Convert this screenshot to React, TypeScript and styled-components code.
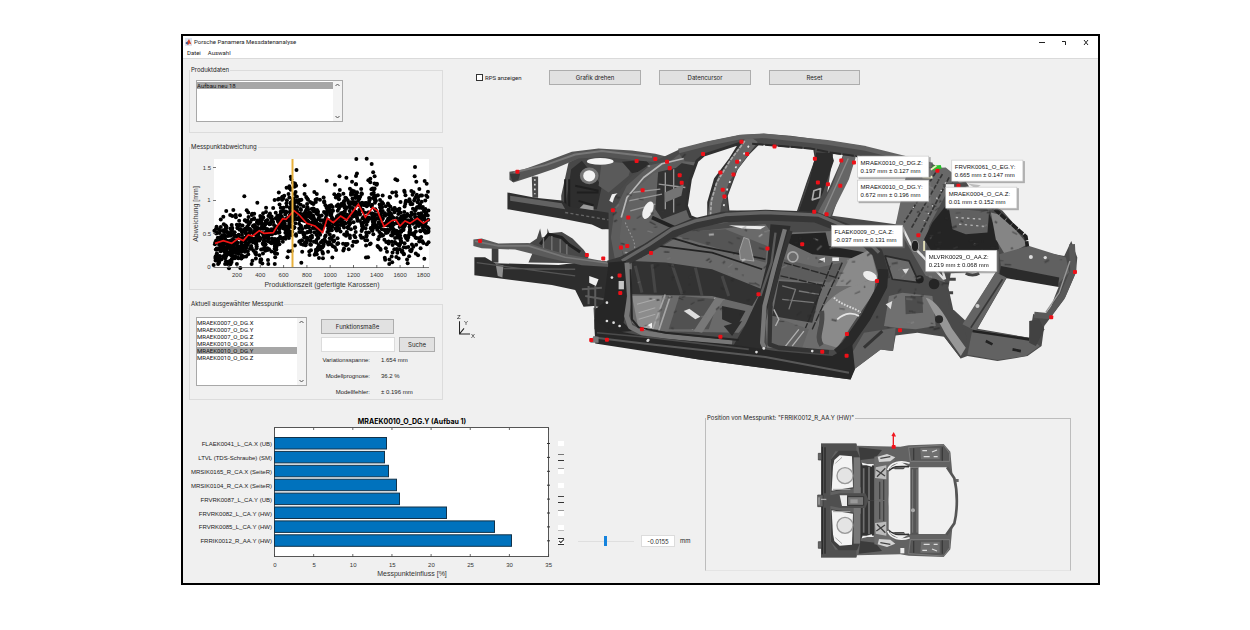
import React from "react";
import styled, { createGlobalStyle } from "styled-components";

const Global = createGlobalStyle`
  *, *::before, *::after { box-sizing: border-box; }
  body { margin: 0; background: #fff; }
  body, button, input, select { font-family: Inter, "Liberation Sans", sans-serif; font-size: 6px; line-height: 8px; color: #1c1c1c; }
`;

/* ---------- window frame ---------- */
const Window = styled.main`
  margin: 34px 150px 0 181px;
  border: 2px solid #000;
  background: #f0f0f0;
`;
const Header = styled.header`
  background: #fff;
  border-bottom: 1px solid #dadada;
`;
const TitleBar = styled.div`
  display: flex;
  align-items: center;
  height: 12px;
  padding: 0 7px 0 2px;
  gap: 2px;
`;
const Title = styled.h1`
  flex: 1;
  margin: 0;
  font: 400 6px/8px Roboto, sans-serif;
`;
const WindowButton = styled.button`
  width: 9px;
  height: 9px;
  margin-left: 11px;
  padding: 0;
  border: 0;
  background: none;
  svg { display: block; }
`;
const MenuBar = styled.nav`
  display: flex;
  gap: 7px;
  height: 10px;
  padding-left: 4px;
`;
const MenuItem = styled.button`
  padding: 0;
  border: 0;
  background: none;
  font-family: Roboto, sans-serif;
`;

/* ---------- layout ---------- */
const Top = styled.div`
  display: grid;
  grid-template-columns: 260px minmax(0, 1fr);
  column-gap: 6px;
`;
const Side = styled.div`
  display: flex;
  flex-direction: column;
  gap: 10px;
  padding: 7px 0 0 6px;
`;
const Bottom = styled.div`
  display: grid;
  grid-template-columns: 372px minmax(0, 1fr) 366px;
  align-items: start;
  margin-top: 9px;
  padding-right: 27px;
`;
const Panel = styled.fieldset<{ $strong?: boolean }>`
  min-width: 0;
  margin: ${p => (p.$strong ? "2px 0 12px" : "0")};
  padding: 0;
  border: 1px solid ${p => (p.$strong ? "#bdbdbd" : "#dcdcdc")};
  border-bottom-color: ${p => (p.$strong ? "#e4e4e4" : "#dcdcdc")};
`;
const Legend = styled.legend`
  padding: 0 1px;
  line-height: 8px;
`;
const Drawing = styled.svg`
  display: block;
  width: 100%;
  height: auto;
`;

/* ---------- controls ---------- */
const ListFrame = styled.div<{ $w: number; $h: number; $mt: number; $mb: number }>`
  display: flex;
  width: ${p => p.$w}px;
  height: ${p => p.$h}px;
  margin: ${p => p.$mt}px 0 ${p => p.$mb}px 6px;
  border: 1px solid #a8a8a8;
  background: #fff;
`;
const List = styled.select`
  flex: 1;
  min-width: 0;
  height: 100%;
  padding: 1px 0 0;
  border: 0;
  outline: 0;
  background: #fff;
  overflow: hidden;
  scrollbar-width: none;
  font: 6px/7px Roboto, sans-serif;
  option { height: 7px; min-height: 7px; padding: 0; font-size: 6px; line-height: 7px; color: #111; }
  option:checked { background: #a6a6a6 linear-gradient(#a6a6a6, #a6a6a6); color: #111; }
`;
const ScrollRail = styled.div`
  display: flex;
  flex-direction: column;
  justify-content: space-between;
  width: 9px;
  padding: 2px;
  background: #f3f3f3;
`;
const Button = styled.button<{ $w: number }>`
  width: ${p => p.$w}px;
  height: 15px;
  padding: 0;
  border: 1px solid #adadad;
  background: #e1e1e1;
`;
const PointBody = styled.div`
  display: flex;
  gap: 14px;
`;
const PointForm = styled.div`
  padding-top: 11px;
`;
const SearchRow = styled.div`
  display: flex;
  gap: 4px;
  margin: 3px 0 4px;
`;
const TextBox = styled.input<{ $w: number; $h: number }>`
  width: ${p => p.$w}px;
  height: ${p => p.$h}px;
  padding: 0;
  border: 1px solid #dcdcdc;
  background: #fff;
  text-align: center;
`;
const Facts = styled.dl`
  display: grid;
  grid-template-columns: 49px auto;
  column-gap: 11px;
  row-gap: 8px;
  margin: 0;
  font-family: "Liberation Sans", sans-serif;
  white-space: nowrap;
`;
const FactName = styled.dt`
  justify-self: end;
`;
const FactValue = styled.dd`
  margin: 0;
`;
const Toolbar = styled.div`
  display: flex;
  align-items: center;
  gap: 18px;
  padding: 11px 0 0 27px;
`;
const CheckLabel = styled.label`
  display: flex;
  align-items: center;
  gap: 2px;
  width: 55px;
  font-family: Roboto, sans-serif;
  white-space: nowrap;
`;
const Check = styled.input`
  appearance: none;
  width: 7px;
  height: 7px;
  margin: 0;
  border: 1px solid #333;
  background: #fff;
`;
const Rows = styled.div`
  padding: 24px 0 0 3px;
`;
const Row = styled.div`
  display: flex;
  align-items: center;
  height: 14px;
`;
const RowCheck = styled.input<{ $top?: string; $bottom?: string; $fill?: string }>`
  appearance: none;
  width: 6px;
  height: 7px;
  margin: 0 14px 0 0;
  border: 0 solid transparent;
  border-top: 1px solid ${p => p.$top ?? "#f0f0f0"};
  border-bottom: 1px solid ${p => p.$bottom ?? "#f0f0f0"};
  background: ${p => p.$fill ?? "#fff"};
  &:checked::before {
    content: "";
    display: block;
    width: 5px;
    height: 3px;
    margin: 0 0 0 1px;
    border: 1px solid #333;
    border-width: 0 0 1px 1px;
    transform: rotate(-45deg);
  }
`;
const Slider = styled.input`
  appearance: none;
  width: 56px;
  height: 11px;
  margin: 0 7px 0 0;
  background: linear-gradient(#dfdfdf, #dfdfdf) center / 100% 1px no-repeat;
  &::-webkit-slider-thumb { appearance: none; width: 3px; height: 10px; background: #1583dd; }
`;
const Unit = styled.span`
  margin-left: 5px;
`;

/* ---------- data ---------- */
const rng = (seed: number) => () => {
  seed = (seed * 1664525 + 1013904223) % 4294967296;
  return seed / 4294967296;
};

// mean deviation over production time, in plot pixels times three
const trend: [number, number][] = [
  [105, 310], [130, 302], [155, 310], [175, 295], [190, 302], [205, 285], [218, 288], [238, 272],
  [252, 280], [280, 278], [292, 258], [308, 236], [318, 238], [342, 212], [358, 225], [380, 250],
  [405, 258], [428, 278], [442, 235], [460, 248], [482, 228], [500, 240], [535, 193], [556, 232],
  [578, 203], [592, 212], [612, 260], [635, 242], [648, 240], [660, 258], [675, 243], [690, 250],
  [712, 235], [730, 250], [748, 238],
];
const trendAt = (x: number) => {
  const i = Math.max(1, trend.findIndex(p => p[0] >= x));
  const [a, b] = [trend[i - 1], trend[i]];
  return a[1] + ((b[1] - a[1]) * (x - a[0])) / (b[0] - a[0]);
};
const samples: [number, number][] = (() => {
  const r = rng(7);
  const out: [number, number][] = [
    [529, 57], [560, 56], [575, 72], [528, 108], [705, 81], [704, 109], [193, 169], [160, 210],
    [147, 385], [181, 384], [241, 366], [364, 368], [683, 370], [101, 375], [232, 188], [374, 136],
    [403, 156], [329, 145], [565, 121], [571, 127], [709, 125], [740, 131], [718, 147], [649, 351],
  ];
  for (let i = 0; i < 1600; i++) {
    const x = 103 + r() * 643;
    const g = (r() + r() + r() + r() - 2) * (x < 280 ? 62 : 78);
    const y = trendAt(x) + g + 3;
    out.push([x, Math.min(372, Math.max(90, y))]);
  }
  return out;
})();

const bars: [string, number][] = [
  ["FLAEK0041_L_CA.X (UB)", 112], ["LTVL (TDS-Schraube) (SM)", 110],
  ["MRSIK0165_R_CA.X (SeiteR)", 114], ["MRSIK0104_R_CA.X (SeiteR)", 122],
  ["FRVRK0087_L_CA.Y (UB)", 125], ["FRVRK0082_L_CA.Y (HW)", 172],
  ["FRVRK0085_L_CA.Y (HW)", 220], ["FRRIK0012_R_AA.Y (HW)", 237],
];
const rowChecks = [
  {}, { $top: "#777", $bottom: "#333", $fill: "transparent" }, { $top: "#999" }, {},
  { $top: "#444", $bottom: "#333", $fill: "transparent" }, { $top: "#999" }, { $bottom: "#bbb" },
  { $top: "#333", $bottom: "#333" },
];
const tips: [number, number, string, string][] = [
  [857, 157, "MRAEK0010_O_DG.Z:", "0.197 mm ± 0.127 mm"],
  [857, 181, "MRAEK0010_O_DG.Y:", "0.672 mm ± 0.196 mm"],
  [951, 161, "FRVRK0061_O_EG.Y:", "0.665 mm ± 0.147 mm"],
  [945, 188, "MRAEK0004_O_CA.Z:", "0.01 mm ± 0.152 mm"],
  [831, 226, "FLAEK0009_O_CA.Z:", "-0.037 mm ± 0.131 mm"],
  [925, 251, "MLVRK0029_O_AA.Z:", "0.219 mm ± 0.068 mm"],
];
const measuringPoints: [number, number][] = [
  [157, 128], [514, 96], [570, 90], [532, 183], [443, 243], [489, 265], [467, 355], [486, 350],
  [557, 371], [45, 335], [365, 377], [414, 388], [463, 439], [465, 491], [530, 600], [378, 632],
  [425, 631], [605, 98], [613, 117], [643, 138], [649, 161], [713, 75], [828, 38], [845, 75],
  [815, 98], [765, 130], [804, 136], [772, 182], [777, 202], [927, 52], [1048, 89], [1127, 94],
  [1165, 100], [1057, 160], [1087, 165], [1124, 170], [1046, 248], [1083, 255], [1010, 345],
  [906, 358], [879, 495], [765, 622], [1144, 614], [1070, 667], [1143, 679], [1415, 125],
  [1478, 170], [1358, 318], [1234, 455], [1303, 603], [1827, 428], [1756, 564],
];

const Font = '"Liberation Sans", sans-serif';

const Arrow = ({ up }: { up?: boolean }) => (
  <svg width="5" height="4" viewBox="0 0 5 4">
    <path d={up ? "M.5 3 2.5 1 4.5 3" : "M.5 1 2.5 3 4.5 1"} fill="none" stroke="#555" />
  </svg>
);

const ScatterChart = () => (
  <Drawing viewBox="190 151 252 138" role="img" aria-label="Messpunktabweichung">
    <rect x="214" y="159" width="215" height="109" fill="#fff" />
    <g transform="translate(180 140) scale(.33333)">
      {samples.map(([x, y], i) => <circle key={i} cx={x} cy={y} r="6" />)}
      <path d={"M" + trend.map(p => p.join(" ")).join("L")} fill="none" stroke="#f01414" strokeWidth="5" />
    </g>
    <path d="M292.500 159V267" stroke="#e8b13c" strokeWidth="2" />
    <path d="M213.500 267.500H429M213 167.500H216M213 200.500H216M213 233.500H216" fill="none" stroke="#555" strokeWidth=".8" />
    <g fontFamily={Font} fontSize="6" fill="#333" textAnchor="middle">
      {[200, 400, 600, 800, 1000, 1200, 1400, 1600, 1800].map((v, i) => (
        <g key={v}>
          <path d={`M${237 + i * 23.3} 268v-3`} stroke="#444" strokeWidth=".8" />
          <text x={237 + i * 23.3} y="277">{v}</text>
        </g>
      ))}
      <text x="207" y="170">1.5</text>
      <text x="209" y="202">1</text>
      <text x="207" y="236">0.5</text>
      <text x="209" y="269">0</text>
      <text x="322" y="287" fontSize="7">Produktionszeit (gefertigte Karossen)</text>
      <text transform="translate(198 214) rotate(-90)" fontSize="7">Abweichung [mm]</text>
    </g>
  </Drawing>
);

const BarChart = () => (
  <Drawing viewBox="183 412 372 171" role="img" aria-label="Messpunkteinfluss">
    <rect x="274.500" y="427.500" width="274" height="129" fill="#fff" stroke="#555" />
    <text x="412" y="424" fontFamily={'Inter, "Liberation Sans", sans-serif'} fontSize="7" fontWeight="700" textAnchor="middle">MRAEK0010_O_DG.Y (Aufbau 1)</text>
    {bars.map(([name, w], i) => (
      <g key={i}>
        <rect x="274.500" y={437.5 + i * 13.9} width={w} height="11.500" fill="#0072bd" stroke="#12324a" />
        <path d={`M547 ${443.5 + i * 13.9}h3`} stroke="#333" />
        <text x="272" y={446 + i * 13.9} fontFamily={Font} fontSize="6" fill="#222" textAnchor="end">{name}</text>
      </g>
    ))}
    {[0, 5, 10, 15, 20, 25, 30, 35].map((v, i) => (
      <g key={v}>
        <path d={`M${274.5 + i * 39.15} 557v-3m0-126v2`} stroke="#444" strokeWidth=".8" />
        <text x={275 + i * 39.1} y="567" fontFamily={Font} fontSize="6" fill="#333" textAnchor="middle">{v}</text>
      </g>
    ))}
    <text x="412" y="576" fontFamily={Font} fontSize="7" fill="#333" textAnchor="middle">Messpunkteinfluss [%]</text>
  </Drawing>
);

const BG = "#f0f0f0";
const bodyShell =
  "M430 410V250L450 200 500 140 570 95 640 62 725 38 825 18 895 14 975 20 1085 35 1185 50 1280 75 1400 105 1455 130 1480 160 1560 215 1610 245 1680 325 1685 360 1795 380 1816 335 1834 385 1830 430 1795 510 1735 590 1727 650 1685 680 1595 695 1505 680 1485 687 1435 622 1355 610 1290 618 1282 665 1245 660 1165 720 1155 750 700 690 525 660 390 640 385 535 430 535Z";

const speckles = (() => {
  const r = rng(21);
  const tones = ["#2b2b2b", "#383838", "#777", "#8c8c8c", "#d8d8d8"];
  return Array.from({ length: 420 }, () => ({
    x: 430 + r() * 1380, y: 30 + r() * 640, w: 4 + r() * 16, h: 2 + r() * 4,
    a: -50 + r() * 80, c: tones[Math.floor(r() * r() * 5)],
  }));
})();

const CarBody = () => (
  <g transform="translate(465 130) scale(.33333)" strokeLinejoin="round">
    <clipPath id="shell"><path d={bodyShell} /></clipPath>

    {/* far front rails and strut tower */}
    <path d="M310 100 340 85 460 78 575 85 605 110 560 150 500 180 450 245 440 300 400 285 290 262 288 200Z" fill="#484848" />
    <path d="M318 120 350 95 410 170 395 240 300 235Z" fill="#2e2e2e" />
    <path d="M410 95 500 105 490 140 430 190 400 170Z" fill="#5a5a5a" />
    <ellipse cx="405" cy="97" rx="40" ry="10" fill="#f4f4f4" />
    <path d="M470 98 540 92 565 118 500 132Z" fill="#2c2c2c" />
    <ellipse cx="372" cy="140" rx="28" ry="25" fill="#777" />
    <ellipse cx="372" cy="140" rx="18" ry="17" fill="#f4f4f4" />
    <path d="M330 170 400 185M335 190H400M340 215 385 228M300 150V230M312 150V235" stroke="#1f1f1f" strokeWidth="6" />
    <path d="M440 195 470 190 455 228 432 215Z" fill="#eee" />
    <path d="M355 225 385 232V244L340 240Z" fill="#999" />
    <path d="M133 128 175 121 240 98 320 68 400 58 500 64 570 74 602 82 600 102 500 93 420 84 340 88 270 118 200 142 145 160 133 152Z" fill="#555" />
    <path d="M145 130 240 108 330 76 410 66 560 84" stroke="#777" strokeWidth="6" fill="none" />
    <path d="M134 134H165L160 152 142 158Z" fill="#383838" />
    <path d="M200 142H219V206H202Z" fill="#484848" />
    <path d="M209 150V195" stroke="#ddd" strokeWidth="5" strokeDasharray="5 9" />
    <path d="M127 190 210 206 290 214 312 232 440 252V300L410 300 380 286 300 270 127 240Z" fill="#2f2f2f" />
    <path d="M135 200 290 222 300 240 135 215Z" fill="#626262" />
    <path d="M300 250 430 272" stroke="#666" strokeWidth="4" strokeDasharray="9 7" />

    {/* near front rails */}
    <path d="M185 348 215 328 225 298 230 325 246 322 247 297 252 312 290 308 322 328 356 362 370 385 345 402 190 400 202 372Z" fill="#484848" />
    <path d="M225 345 250 315 290 325 310 345 345 368" stroke="#202020" strokeWidth="9" fill="none" />
    <path d="M235 365V325M260 370V320M285 375V330M305 380V345" stroke="#777" strokeWidth="4" />
    <path d="M80 350H100V400H80Z" fill="#3d3d3d" />
    <path d="M28 384H60L90 402 280 407 340 400 440 405V540L385 530 355 532 330 482 260 467 100 447 28 438Z" fill="#2d2d2d" />
    <path d="M92 405 115 408 112 445 98 440Z" fill="#909090" />
    <path d="M115 418 330 420M35 400 330 440" stroke="#555" strokeWidth="4" />
    <path d="M25 331 50 328 100 343 190 341 240 358 300 374 400 393 445 398V414L350 408 250 386 150 361 50 357 25 350Z" fill="#5b5b5b" />
    <path d="M30 336 100 350 190 350 300 384 430 402" stroke="#777" strokeWidth="5" fill="none" />
    <path d="M372 440 400 450 392 470 372 460ZM405 345 422 300 440 320V395H408Z" fill={BG} />
    <path d="M350 480 410 475M360 500 415 510M370 470V525M390 470V540" stroke="#5c5c5c" strokeWidth="6" />

    {/* cabin */}
    <path d={bodyShell} fill="#4a4a4a" />
    <path d="M470 210 530 130 640 95 700 100 670 240 790 280 640 300 480 390 455 320Z" fill="#626262" />
    <path d="M580 110 640 100 690 110 668 240 590 270 570 240Z" fill="#323232" />
    <path d="M500 190 585 180M490 215 590 195M495 245 570 225M600 130V240M625 120V250M580 165 660 175" stroke="#989898" strokeWidth="4" />
    <path d="M598 190 655 165 648 200 600 220Z" fill="#747474" />
    <ellipse cx="548" cy="243" rx="14" ry="28" transform="rotate(24 548 243)" fill="#f0f0f0" />
    <path d="M560 265 660 310" stroke="#222" strokeWidth="11" />
    <path d="M650 85 625 105 560 120 495 178 460 250 450 325 462 390" stroke="#5d5d5d" strokeWidth="26" fill="none" />
    <path d="M655 88 590 104 535 145 485 205 468 265" stroke="#b8b8b8" strokeWidth="5" fill="none" />
    <path d="M480 280C500 330 520 340 500 390" stroke="#999" strokeWidth="3" strokeDasharray="5 6" fill="none" />

    {/* openings on the far side */}
    <path d="M715 78 825 42 795 90 750 150 730 220V265L705 275 675 262 663 230 675 150 695 95Z" fill={BG} stroke="#2f2f2f" strokeWidth="9" />
    <path d="M880 45 1045 60 1050 90 1025 160 995 250 790 245 785 200 815 120 850 75Z" fill={BG} stroke="#3a3a3a" strokeWidth="4" />
    <path d="M1103 74 1132 78 1120 110 1085 190Z" fill={BG} />
    <path d="M1172 78 1330 118 1335 165 1290 285 1100 260 1120 200Z" fill={BG} />
    <path d="M862 28 820 85 775 150 750 220 745 262" stroke="#666" strokeWidth="36" fill="none" />
    <path d="M838 36 790 100 754 160 738 215 735 262" stroke="#aaa" strokeWidth="5" fill="none" strokeDasharray="11 4" />
    <path d="M850 50 805 125 782 190 772 250" stroke="#e5e5e5" strokeWidth="5" fill="none" strokeDasharray="6 18" />
    <path d="M1052 70 1098 72 1105 95 1072 190 1040 260H995L1030 160Z" fill="#2b2b2b" />
    <path d="M1045 185 1065 178 1062 205 1040 212Z" fill="none" stroke="#aaa" strokeWidth="5" />
    <path d="M1135 75 1170 85 1150 150 1090 270 1048 266 1100 170Z" fill="#666" />
    <path d="M1148 88 1070 262" stroke="#8a8a8a" strokeWidth="4" />
    <path d="M640 66 725 44 825 24 895 20 1085 40 1200 58 1400 108" stroke="#626262" strokeWidth="14" fill="none" />
    <path d="M860 44 1035 58 1095 70 1200 85" stroke="#2b2b2b" strokeWidth="6" fill="none" strokeDasharray="34 5" />

    {/* rear pillar and parcel shelf */}
    <path d="M1325 120 1440 115 1470 140 1390 290 1380 370 1440 460 1380 440 1290 285Z" fill="#686868" />
    <path d="M1430 135 1335 300M1450 145 1365 310M1410 130 1315 280" stroke="#343434" strokeWidth="5" strokeDasharray="14 5" />
    <path d="M1400 145 1330 255M1440 160 1375 275" stroke="#d5d5d5" strokeWidth="4" strokeDasharray="4 22" />
    <path d="M1470 195 1440 230 1400 280 1375 330 1400 370 1550 375 1600 360 1590 300 1560 230Z" fill="#242424" />
    <path d="M1450 240 1570 245 1565 310 1500 315 1460 300Z" fill="#606060" />
    <path d="M1470 265 1550 270M1480 285 1560 292" stroke="#b8b8b8" strokeWidth="4" strokeDasharray="7 10" />
    <path d="M1575 250 1615 260 1685 345 1620 380 1590 330Z" fill="#858585" />
    <path d="M1570 225 1680 322 1685 355" stroke="#1f1f1f" strokeWidth="11" fill="none" strokeDasharray="20 3" />

    {/* trunk frame */}
    <path d="M1600 375 1690 350 1800 385 1810 430 1770 470 1610 435Z" fill="#606060" />
    <path d="M1605 410 1780 445 1775 476 1600 442Z" fill="#2b2b2b" />
    <path d="M1455 432 1592 425 1500 575 1462 540 1448 475Z" fill={BG} />
    <path d="M1622 447 1778 473 1765 505 1748 555 1712 560 1702 553 1690 625 1535 598Z" fill={BG} />
    <path d="M1590 430 1622 445 1530 605 1490 585Z" fill="#646464" />
    <path d="M1610 450 1515 595" stroke="#383838" strokeWidth="5" />
    <path d="M1520 600 1690 625 1722 650 1680 680 1595 692 1505 676Z" fill="#626262" />
    <path d="M1520 605 1690 630M1560 635 1580 645M1640 660 1665 665" stroke="#222" strokeWidth="8" />
    <path d="M1818 345 1822 425 1790 500 1745 560 1705 556" stroke="#595959" strokeWidth="18" fill="none" />
    <path d="M1812 395 1780 490 1740 548" stroke="#999" strokeWidth="4" fill="none" />
    <path d="M1690 575 1720 570 1735 600 1710 650 1690 640Z" fill="#424242" />
    <circle cx="1535" cy="530" r="6" fill="#ccc" /><circle cx="1695" cy="383" r="6" fill="#ddd" /><circle cx="1738" cy="385" r="5" fill="#ddd" />
    <path d="M1450 450H1470M1450 490H1462M1500 432A25 12 0 0 0 1540 432" stroke="#444" strokeWidth="9" fill="none" />

    {/* interior seen through the near doors */}
    <path d="M490 400 560 368 660 310 900 285 925 320 915 410 860 560 820 610 540 605 500 580Z" fill="#6a6a6a" />
    <path d="M500 395 600 400 740 420 890 480 860 530 740 500 500 495Z" fill="#323232" />
    <path d="M510 410 530 490M560 405 570 490M620 405 650 495M690 415 710 500M770 440 790 500" stroke="#464646" strokeWidth="9" />
    <path d="M600 310 900 400 905 350 780 300Z" fill="#555" />
    <path d="M580 350 740 370 890 420M600 320 700 350 900 390" stroke="#222" strokeWidth="5" fill="none" />
    <path d="M822 365 835 325 850 330 865 395 825 390Z" fill="#7d7d7d" stroke="#a2a2a2" strokeWidth="3" />
    <path d="M790 288 900 291 885 300 830 298Z" fill="#ececec" />
    <path d="M500 500 590 500 580 600 520 600Z" fill="#8c8c8c" />
    <path d="M600 495 560 605M615 500 580 605M750 505 690 605M720 510 680 600" stroke="#a6a6a6" strokeWidth="5" />
    <path d="M642 500 760 510 730 600 610 600Z" fill="#515151" />
    <path d="M750 505 775 510 710 610 685 605Z" fill="#787878" />
    <path d="M655 545 672 538 705 562 690 570Z" fill="#ddd" />
    <path d="M530 595 560 580V595L535 603Z" fill="#f2f2f2" />
    <path d="M770 530 840 545 815 590 770 570ZM775 590 830 575 800 620Z" fill="#2c2c2c" />
    <path d="M515 525 570 510M520 550 570 535M520 570 570 555" stroke="#aaa" strokeWidth="3" />

    <path d="M970 310 1100 305 1230 365 1242 440 1140 620 1110 662 905 655 900 580 940 430Z" fill="#6c6c6c" />
    <path d="M975 315 1080 310 1090 350 1200 370 1195 390 1040 375 965 340Z" fill="#232323" />
    <path d="M955 390 1060 415 1130 400 1110 460 940 450Z" fill="#5c5c5c" />
    <path d="M940 455 1070 465 1040 580 920 560Z" fill="#333" />
    <path d="M955 400 1130 450M945 440 1080 470M1100 400 1010 620M1130 400 1040 600" stroke="#2a2a2a" strokeWidth="4" strokeDasharray="24 4" />
    <path d="M950 470 990 480 970 540M1000 485 1060 495M950 510 1045 520" stroke="#777" strokeWidth="4" fill="none" />
    <circle cx="982" cy="383" r="15" fill="none" stroke="#aaa" strokeWidth="5" />
    <path d="M1060 390 1078 385V400ZM1100 385H1120V395H1100Z" fill="#eee" />
    <path d="M920 560 1030 600 1010 655 910 650Z" fill="#636363" />
    <path d="M925 540 940 570 930 590M1000 600 960 650M1015 605 980 650" stroke="#b0b0b0" strokeWidth="4" fill="none" />
    <path d="M1070 540C1090 500 1160 460 1230 450L1225 490 1150 600 1115 655 1065 640C1050 600 1060 570 1070 540Z" fill="#8a8a8a" />
    <path d="M1105 505C1130 530 1170 535 1185 550" stroke="#d8d8d8" strokeWidth="6" fill="none" strokeDasharray="5 4" />
    <path d="M1068 545C1076 590 1048 620 1068 648" stroke="#4a4a4a" strokeWidth="15" fill="none" />
    <path d="M1115 570C1140 548 1165 550 1180 560" stroke="#e4e4e4" strokeWidth="5" fill="none" />
    <path d="M1110 470 1150 390 1215 360 1235 440 1170 470Z" fill="#8a8a8a" />
    <ellipse cx="1213" cy="440" rx="22" ry="13" transform="rotate(25 1213 440)" fill="#eee" />

    {/* rear quarter */}
    <path d="M1240 370 1300 370 1380 440 1440 460 1450 530 1500 610 1505 660 1485 687 1430 615 1355 600 1270 600 1165 720 1140 690 1235 520 1255 460Z" fill="#4a4a4a" />
    <path d="M1258 380 1330 395 1360 460 1280 450Z" fill="#6a6a6a" stroke="#2b2b2b" strokeWidth="5" />
    <path d="M1255 590 1270 500 1310 490 1400 500 1410 590 1350 600 1290 595Z" fill="#707070" />
    <path d="M1318 500H1370L1372 550 1320 555Z" fill="#4d4d4d" />
    <path d="M1380 505C1410 510 1440 560 1460 600L1500 655 1485 680 1440 615Z" fill="#979797" />
    <path d="M1310 295 1335 345 1370 380 1435 450M1420 390 1438 450" stroke="#e2e2e2" strokeWidth="7" fill="none" />
    <ellipse cx="1348" cy="350" rx="11" ry="17" fill="#202020" stroke="#999" strokeWidth="3" />
    <circle cx="1362" cy="450" r="12" fill="#1f1f1f" /><circle cx="1405" cy="464" r="16" fill="#252525" /><circle cx="1420" cy="570" r="12" fill="#292929" />
    <path d="M1260 525 1280 515 1275 540ZM1310 420 1330 418 1320 435Z" fill="#ddd" />
    <path d="M1195 610 1290 595 1282 665 1245 660 1165 720 1160 670Z" fill="#626262" />
    <path d="M1195 655 1250 605" stroke="#343434" strokeWidth="9" />

    <g clipPath="url(#shell)" opacity=".65">
      {speckles.map((s, i) => {
        const open =
          (s.x > 655 && s.x < 1345 && s.y < 290) || (s.x > 1440 && s.y > 420) || s.y > 600;
        return open ? null : (
          <rect key={i} x={s.x} y={s.y} width={s.w} height={s.h} fill={s.c} transform={`rotate(${s.a} ${s.x} ${s.y})`} />
        );
      })}
    </g>

    {/* near roof rail, pillars and sill */}
    <path d="M430 410 470 398 545 358 615 312 680 285 770 264 900 258 1050 264 1170 310 1235 370 1258 450" stroke="#363636" strokeWidth="32" fill="none" />
    <path d="M470 395 550 347 620 300 690 275 780 256 900 250 1060 258 1180 310 1240 370" stroke="#656565" strokeWidth="10" fill="none" />
    <path d="M1253 420 1250 470 1200 565 1140 650 1115 672" stroke="#292929" strokeWidth="30" fill="none" />
    <path d="M915 285 975 290 950 400 890 590 892 665 800 655 838 590 880 500 905 400Z" fill="#2d2d2d" />
    <path d="M958 300 925 420 897 530 890 640 897 655" stroke="#777" strokeWidth="13" fill="none" />
    <path d="M975 305 945 400 915 520 912 645 940 655 1090 668" stroke="#343434" strokeWidth="13" fill="none" />
    <path d="M930 310 918 400 885 500" stroke="#5b5b5b" strokeWidth="7" fill="none" />
    <path d="M430 400 482 395 485 520 475 580 500 605 440 610 388 600 390 540 415 520Z" fill="#262626" />
    <path d="M485 400 493 500 484 560 495 592 530 610 600 620 800 640" stroke="#777" strokeWidth="15" fill="none" />
    <path d="M496 420 500 570 520 594 600 610 820 632" stroke="#252525" strokeWidth="6" fill="none" />
    <path d="M388 570 430 600 560 625 800 645 930 665 1100 680 1160 645 1168 720 1155 750 700 690 390 642Z" fill="#272727" />
    <path d="M392 625 560 645 900 683 1150 730" stroke="#585858" strokeWidth="6" fill="none" />
    <path d="M395 610 560 625 850 660" stroke="#4b4b4b" strokeWidth="5" fill="none" />
    <path d="M385 620 400 622V640H375Z" fill="#777" />
    <path d="M460 455H476V480H460Z" fill="#c5c5c5" />
    {[[425, 575], [445, 580], [463, 590], [549, 632], [547, 634], [873, 668], [895, 657], [1040, 665], [440, 445], [425, 520]].map(([x, y], i) => (
      <circle key={i} cx={x} cy={y} r="4" fill="#ddd" />
    ))}

    {/* bracket between the call-outs */}
    <path d="M1400 110 1425 108 1428 118 1402 124Z" fill="#28c32c" />
    <path d="M1395 122 1412 110M1370 145 1395 146 1398 140M1375 335V365" stroke="#f0ecc0" strokeWidth="5" fill="none" />
    <path d="M1430 165 1500 158 1510 172 1440 180Z" fill="#4c4c4c" />
    <path d="M1440 165H1465V176H1440Z" fill="#eee" />
    <path d="M1505 163 1545 168 1530 178Z" fill="#bdbdbd" />

    {measuringPoints.map(([x, y], i) => (
      <rect key={i} x={x - 6} y={y - 6} width="12" height="12" rx="3" fill="#ee1018" />
    ))}
  </g>
);

const Scene = () => (
  <Drawing viewBox="449 86 648 318" role="img" aria-label="Karosserie mit Messpunkten">
    <CarBody />
    {tips.map(([x, y, a, b]) => (
      <g key={a}>
        <rect x={x + 1} y={y + 1} width="72" height="22" fill="#777" opacity=".55" />
        <rect x={x} y={y} width="71" height="21" fill="#fff" stroke="#c4c4c4" strokeWidth=".6" />
        <g fontFamily={Font} fontSize="6" fill="#111">
          <text x={x + 3} y={y + 9}>{a}</text>
          <text x={x + 3} y={y + 17}>{b}</text>
        </g>
      </g>
    ))}
    <path d="M459.500 322V334.500H470M459.500 334.500 464 329" fill="none" stroke="#222" />
    <g fontFamily={Font} fontSize="6" fill="#222">
      <text x="457" y="320">Z</text>
      <text x="464" y="326">Y</text>
      <text x="471" y="339">X</text>
    </g>
  </Drawing>
);

const halfRear = (
  <g>
    <path d="M62 100H168L170 107 300 110 325 106 430 102 450 125 456 190 440 172 330 172 300 155 270 172 265 272H62Z" fill="#626262" />
    <path d="M62 102H168V128L105 124 90 150V272H62Z" fill="#505050" />
    <path d="M66 110V270M74 112V250" stroke="#2b2b2b" strokeWidth="4" />
    <path d="M92 148 115 122H170L182 150V232L92 245Z" fill="#404040" />
    <path d="M102 150 118 136 155 139 158 232 94 242 98 170Z" fill="#f3f3f3" />
    <circle cx="134" cy="197" r="24" fill="#e4e4e4" stroke="#999" strokeWidth="4" />
    <path d="M98 238H150M105 160 125 142" stroke="#aaa" strokeWidth="3" />
    <path d="M160 142H180V250H160Z" fill="#777" />
    <path d="M182 160 222 168V272H182Z" fill="#333" />
    <path d="M190 175V270M206 170V270" stroke="#707070" strokeWidth="5" />
    <path d="M175 112 245 120 225 145 180 150Z" fill="#3c3c3c" />
    <path d="M186 164H220M185 160 215 168" stroke="#eee" strokeWidth="4" />
    <path d="M222 140 250 135 285 150 262 175V272H222Z" fill="#6b6b6b" />
    <path d="M226 172 258 166V208L224 204Z" fill="#bcbcbc" />
    <path d="M232 140 260 132 285 142 270 154 236 156Z" fill="#d4d4d4" />
    <path d="M228 180 254 198M230 200 255 175M240 145 270 140M250 210V270M238 215V268" stroke="#414141" strokeWidth="4" />
    <path d="M262 180C270 158 300 150 328 160" stroke="#f2f2f2" strokeWidth="5" fill="none" />
    <path d="M268 182C276 170 290 168 326 170" stroke="#303030" strokeWidth="5" fill="none" />
    <path d="M280 172H315L305 184H285Z" fill="#4c4c4c" />
    <path d="M325 112 430 105 448 130V154H330Z" fill="#575757" stroke="#7c7c7c" strokeWidth="3" />
    <path d="M360 115H418V148H362Z" fill="#707070" />
    <path d="M366 122H380M395 126 410 120M370 140H388M400 140H412" stroke="#ddd" strokeWidth="4" />
    <path d="M340 115V150M426 112V152" stroke="#3a3a3a" strokeWidth="4" />
  </g>
);

const RearView = () => (
  <Drawing viewBox="-283 36 1092 444" role="img" aria-label="Position des Messpunkts">
    {halfRear}
    <g transform="matrix(1 0 0 -1 0 543)">{halfRear}</g>
    <path d="M265 185 275 178H330V366H275L265 358Z" fill={BG} />
    <path d="M330 172H355V374H330Z" fill="#555" />
    <path d="M337 178V368M350 178V368" stroke="#7c7c7c" strokeWidth="3" />
    <path d="M355 174H440L460 205 466 272 460 340 440 372H355Z" fill={BG} />
    <path d="M440 172 462 205C472 245 472 300 462 340L438 374" stroke="#555" strokeWidth="8" fill="none" />
    <path d="M466 207H475V216H466Z" fill="#666" />
    <path d="M80 258 120 250H195L205 270 195 294H120L80 286Z" fill="#4f4f4f" />
    <path d="M118 256H140V288H125Z" fill="#ececec" />
    <path d="M142 260H190V286H142Z" fill="#777" stroke="#333" strokeWidth="3" />
    <path d="M150 268H172V280H150Z" fill="#999" />
    <path d="M52 255H68V290H52ZM54 130H64V150H54ZM54 395H64V415H54Z" fill="#666" stroke="#333" strokeWidth="2" />
    <path d="M62 268H78M56 262V284" stroke="#bbb" strokeWidth="3" />
    <circle cx="338" cy="301" r="6" fill="#aaa" />
    <path d="M300 414H312V430H300Z" fill="#eee" />
    <path d="M279 72V110M275 78 280 70 285 80" stroke="#f01820" strokeWidth="4" fill="none" />
    <rect x="274" y="105" width="12" height="11" rx="3" fill="#f01018" />
  </Drawing>
);

const ListBox = ({ label, items, selected, w, h, mt, mb }: {
  label: string; items: string[]; selected: number; w: number; h: number; mt: number; mb: number;
}) => (
  <ListFrame $w={w} $h={h} $mt={mt} $mb={mb}>
    <List size={Math.max(4, items.length)} aria-label={label} defaultValue={String(selected)}>
      {items.map((t, i) => <option key={i} value={String(i)}>{t}</option>)}
    </List>
    <ScrollRail aria-hidden="true"><Arrow up /><Arrow /></ScrollRail>
  </ListFrame>
);

export default function App() {
  return (
    <>
      <Global />
      <Window>
        <Header>
          <TitleBar>
            <svg width="7" height="8" viewBox="0 0 14 16">
              <rect width="14" height="16" fill="#dfe6f2" />
              <path d="M1 10 5 7 8 2 13 13 9 11 6 14Z" fill="#d2452a" />
              <path d="M1 10 5 7 6 11 4 13Z" fill="#2c5f9e" />
            </svg>
            <Title>Porsche Panamera Messdatenanalyse</Title>
            <WindowButton aria-label="Minimieren"><svg width="9" height="9"><path d="M1 4.500H7" stroke="#222" /></svg></WindowButton>
            <WindowButton aria-label="Verkleinern"><svg width="9" height="9"><path d="M2 3.500H5.500V7" fill="none" stroke="#222" /></svg></WindowButton>
            <WindowButton aria-label="Schließen"><svg width="9" height="9"><path d="M2 2 6 7M6 2 2 7" stroke="#222" /></svg></WindowButton>
          </TitleBar>
          <MenuBar>
            <MenuItem>Datei</MenuItem>
            <MenuItem>Auswahl</MenuItem>
          </MenuBar>
        </Header>

        <Top>
          <Side>
            <Panel>
              <Legend>Produktdaten</Legend>
              <ListBox label="Produktdaten" items={["Aufbau neu 18"]} selected={0} w={147} h={42} mt={6} mb={10} />
            </Panel>
            <Panel>
              <Legend>Messpunktabweichung</Legend>
              <ScatterChart />
            </Panel>
            <Panel>
              <Legend>Aktuell ausgewählter Messpunkt</Legend>
              <PointBody>
                <ListBox
                  label="Messpunkt" selected={4} w={111} h={69} mt={9} mb={13}
                  items={["MRAEK0007_O_DG.X", "MRAEK0007_O_DG.Y", "MRAEK0007_O_DG.Z", "MRAEK0010_O_DG.X", "MRAEK0010_O_DG.Y", "MRAEK0010_O_DG.Z"]}
                />
                <PointForm>
                  <Button $w={73}>Funktionsmaße</Button>
                  <SearchRow>
                    <TextBox $w={74} $h={15} aria-label="Messpunkt suchen" />
                    <Button $w={36}>Suche</Button>
                  </SearchRow>
                  <Facts>
                    <FactName>Variationsspanne:</FactName><FactValue>1.654 mm</FactValue>
                    <FactName>Modellprognose:</FactName><FactValue>36.2 %</FactValue>
                    <FactName>Modellfehler:</FactName><FactValue>± 0.196 mm</FactValue>
                  </Facts>
                </PointForm>
              </PointBody>
            </Panel>
          </Side>
          <div>
            <Toolbar>
              <CheckLabel><Check type="checkbox" />RPS anzeigen</CheckLabel>
              <Button $w={92}>Grafik drehen</Button>
              <Button $w={92}>Datencursor</Button>
              <Button $w={91}>Reset</Button>
            </Toolbar>
            <Scene />
          </div>
        </Top>

        <Bottom>
          <BarChart />
          <Rows>
            {rowChecks.map((c, i) => (
              <Row key={i}>
                <RowCheck type="checkbox" aria-label={bars[i][0]} defaultChecked={i === 7} {...c} />
                {i === 7 && (
                  <>
                    <Slider type="range" aria-label="Abweichung" min={-1} max={1} step={0.0001} defaultValue={-0.0155} />
                    <TextBox $w={34} $h={12} aria-label="Abweichung in mm" defaultValue="-0.0155" />
                    <Unit>mm</Unit>
                  </>
                )}
              </Row>
            ))}
          </Rows>
          <Panel $strong>
            <Legend>Position von Messpunkt: "FRRIK0012_R_AA.Y (HW)"</Legend>
            <RearView />
          </Panel>
        </Bottom>
      </Window>
    </>
  );
}
